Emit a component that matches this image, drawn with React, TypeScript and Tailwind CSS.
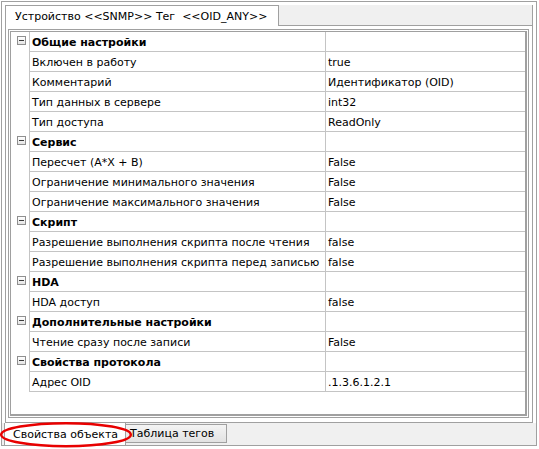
import React from "react";

type Row = { cat?: boolean; label: string; value?: string };

const rows: Row[] = [
  { cat: true, label: "Общие настройки" },
  { label: "Включен в работу", value: "true" },
  { label: "Комментарий", value: "Идентификатор (OID)" },
  { label: "Тип данных в сервере", value: "int32" },
  { label: "Тип доступа", value: "ReadOnly" },
  { cat: true, label: "Сервис" },
  { label: "Пересчет (A*X + B)", value: "False" },
  { label: "Ограничение минимального значения", value: "False" },
  { label: "Ограничение максимального значения", value: "False" },
  { cat: true, label: "Скрипт" },
  { label: "Разрешение выполнения скрипта после чтения", value: "false" },
  { label: "Разрешение выполнения скрипта перед записью", value: "false" },
  { cat: true, label: "HDA" },
  { label: "HDA доступ", value: "false" },
  { cat: true, label: "Дополнительные настройки" },
  { label: "Чтение сразу после записи", value: "False" },
  { cat: true, label: "Свойства протокола" },
  { label: "Адрес OID", value: ".1.3.6.1.2.1" },
];

function Minus() {
  return (
    <div className="w-[9px] h-[9px] border border-[#8f8f8f] bg-gradient-to-b from-white to-[#e4e4e4] flex items-center justify-center">
      <div className="w-[5px] h-[1px] bg-[#3a3a3a]" />
    </div>
  );
}

export default function App() {
  return (
    <div
      className="w-[539px] h-[449px] bg-white relative overflow-hidden text-[11px] text-black leading-none"
      style={{ fontFamily: '"DejaVu Sans", Verdana, sans-serif' }}
    >
      <div className="ml-[1px] mt-[1px] w-[536px] h-[445px] border border-[#a0a0a0] flex flex-col">
        <div className="h-[3px] shrink-0" />
        {/* top tab header */}
        <div className="flex h-[21px] mx-[3px] shrink-0">
          <div className="w-[274px] h-[21px] bg-white border-l border-t border-r border-[#a0a0a0] flex items-center pl-[9px] whitespace-pre">
            {"Устройство <<SNMP>> Тег  <<OID_ANY>>"}
          </div>
          <div className="flex-1 bg-[#f0f0f0] border-b border-r border-[#a0a0a0]" />
        </div>
        {/* page */}
        <div className="h-[397px] mx-[3px] border-l border-r border-b border-[#a0a0a0] flex flex-col shrink-0">
          <div className="mt-[3px] ml-[2px] mr-[3px] h-[389px] border border-[#a0a0a0] pl-[1px] pt-[1px] pr-[1px] pb-[1px] flex">
            <div className="flex-1 border-l border-t border-r-2 border-b-2 border-[#a0a0a0] flex flex-col">
              {rows.map((r, i) => (
                <div key={i} className="flex h-[20px]">
                  <div className="w-[19px] border-r border-[#c4c4c4] flex items-start pt-[4px] pl-[6px]">
                    {r.cat ? <Minus /> : null}
                  </div>
                  <div className="flex-1 flex border-b border-[#c4c4c4]">
                    <div
                      className={
                        "w-[296px] border-r border-[#c4c4c4] flex items-center pl-[2px] pt-[1px] overflow-hidden whitespace-nowrap " +
                        (r.cat ? "font-bold" : "")
                      }
                    >
                      {r.label}
                    </div>
                    <div className="flex-1 flex items-center pl-[2px] pt-[1px] overflow-hidden whitespace-nowrap">
                      {r.value ?? ""}
                    </div>
                  </div>
                </div>
              ))}
            </div>
          </div>
        </div>
        {/* bottom tabs */}
        <div className="flex-1 bg-[#f0f0f0] flex">
          <div className="ml-[2px] w-[122px] h-[22px] bg-white border-l border-r border-[#a0a0a0] flex items-center pl-[8px]">
            Свойства объекта
          </div>
          <div className="mt-[1px] w-[101px] h-[19px] border-t border-r border-b border-[#a0a0a0] bg-gradient-to-b from-[#f4f4f4] to-[#e2e2e2] flex items-center pl-[4px]">
            Таблица тегов
          </div>
        </div>
      </div>
      <svg className="absolute left-0 top-[420px]" width="140" height="29" viewBox="0 0 140 29">
        <ellipse cx="66" cy="14.7" rx="64.8" ry="11.5" fill="none" stroke="#e80000" strokeWidth="2.5" />
      </svg>
    </div>
  );
}
